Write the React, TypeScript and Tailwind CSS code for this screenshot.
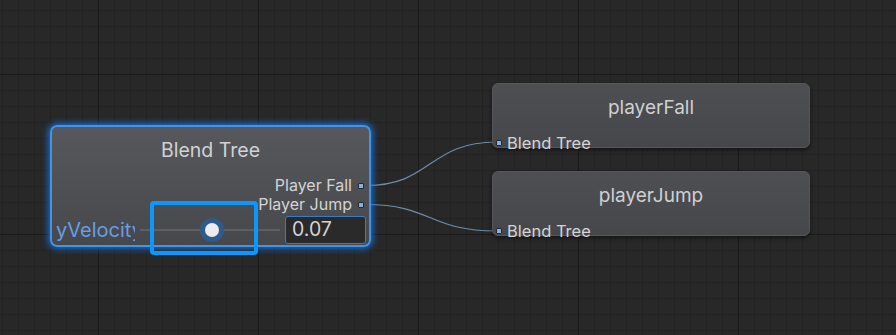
import React from "react";

const font = { fontFamily: "Inter, 'Noto Sans', sans-serif" };

function Port() {
  return <span className="block w-[6px] h-[6px] rounded-[1px] bg-[#8fb0d4] border border-[#1e2a36]" />;
}

function StateNode({ top, title }: { top: string; title: string }) {
  return (
    <div
      className={`absolute left-[492px] ${top} w-[318px] h-[65px] rounded-[6px] bg-gradient-to-b from-[#4d4f53] to-[#45474b] border border-[#55575b] shadow-[0_2px_4px_rgba(0,0,0,0.5)] flex flex-col`}
    >
      <div className="shrink-0 h-[48px] flex items-center justify-center text-[19px] text-[#d0d0d0]">{title}</div>
      <div className="shrink-0 mt-[1px] flex items-center gap-[5px] pl-[3px] text-[16.5px] leading-[20px] text-[#d4d4d4]">
        <Port />
        <span>Blend Tree</span>
      </div>
    </div>
  );
}

export default function App() {
  return (
    <div
      style={font}
      className="relative w-[896px] h-[335px] overflow-hidden bg-[#282828] bg-[linear-gradient(to_right,#1a1a1a_1px,transparent_1px),linear-gradient(to_bottom,#1a1a1a_1px,transparent_1px),linear-gradient(to_right,#222222_1px,transparent_1px),linear-gradient(to_bottom,#222222_1px,transparent_1px)] [background-size:160px_160px,160px_160px,16px_16px,16px_16px] [background-position:98px_74px,98px_74px,2px_10px,2px_10px]"
    >
      {/* connections */}
      <svg className="absolute inset-0" width="896" height="335">
        <path d="M366 185.5 C 432 185.5, 428 142, 497 142" stroke="#6f8ca8" strokeWidth="1.2" fill="none" />
        <path d="M366 204.5 C 432 204.5, 428 231, 497 231" stroke="#6f8ca8" strokeWidth="1.2" fill="none" />
      </svg>

      {/* blend tree node */}
      <div className="absolute left-[50px] top-[125px] w-[321px] h-[122px] rounded-[7px] border-2 border-[#3f95ea] shadow-[0_0_6px_2px_rgba(20,130,255,0.75)] bg-gradient-to-b from-[#56585c] to-[#46484c] flex flex-col">
        <div className="shrink-0 h-[47px] pt-[1px] flex items-center justify-center text-[19.5px] text-[#d2d2d2]">Blend Tree</div>
        <div className="shrink-0 mt-[2px] flex flex-col items-end pr-[5px] text-[16px] leading-[19px] text-[#d4d4d4]">
          <div className="flex items-center gap-[6px]">
            <span>Player Fall</span>
            <Port />
          </div>
          <div className="flex items-center gap-[6px]">
            <span>Player Jump</span>
            <Port />
          </div>
        </div>
        <div className="shrink-0 relative flex items-center h-[28px] mt-[2px]">
          <div className="w-[83px] pl-[4px] overflow-hidden whitespace-nowrap text-[20px] text-[#6a9ee2]">yVelocity</div>
          <div className="relative w-[140px] ml-[5px] h-[28px] flex items-center">
            <div className="w-full h-[2px] bg-[#5d5f63]" />
            <div className="absolute left-[60px] w-[24px] h-[24px] rounded-full bg-[#2d5c8c] flex items-center justify-center">
              <div className="w-[14px] h-[14px] rounded-full bg-[#ececec]" />
            </div>
          </div>
          <div className="ml-[5px] w-[81px] h-[28px] rounded-[3px] bg-[#2a2a2a] border border-[#3a7bc8] flex items-center pl-[6px] text-[19.5px] text-[#d4d4d4]">
            0.07
          </div>
          <div className="absolute left-[98px] top-[-15px] w-[108px] h-[54px] rounded-[4px] border-4 border-[#0a98ff]" />
        </div>
      </div>

      <StateNode top="top-[83px]" title="playerFall" />
      <StateNode top="top-[171px]" title="playerJump" />
    </div>
  );
}
